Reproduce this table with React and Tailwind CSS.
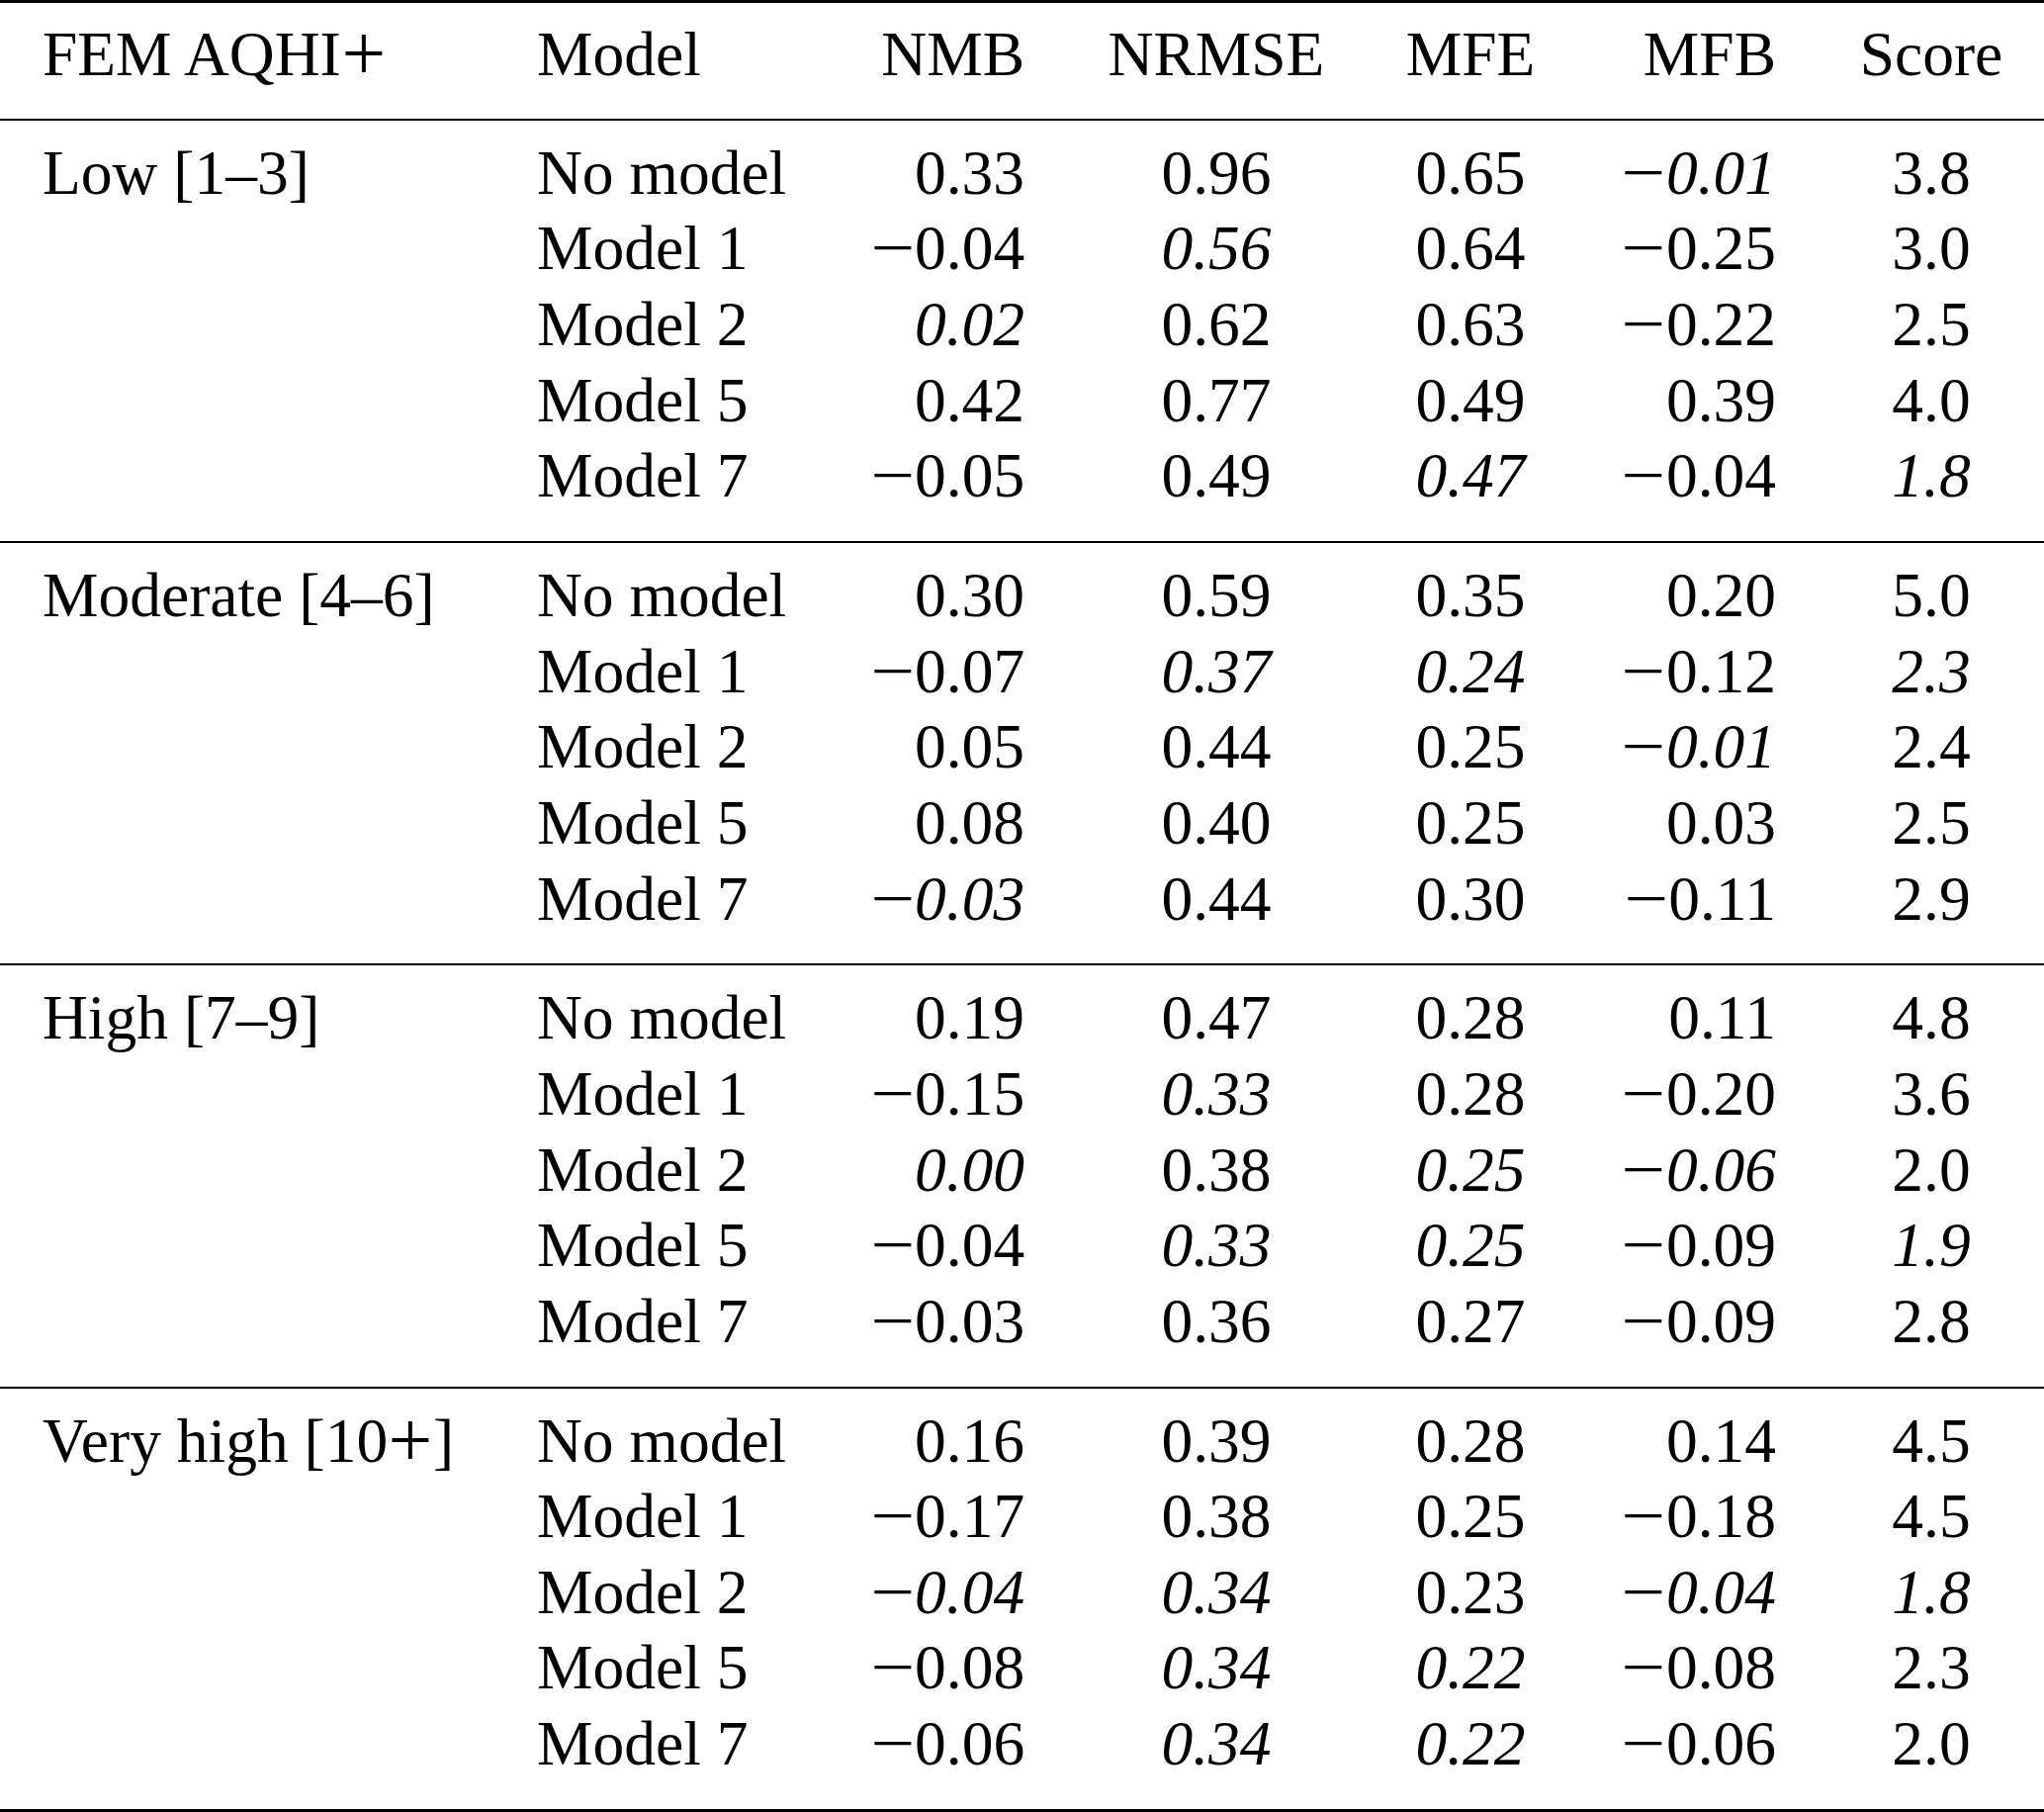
import React from 'react';

// values prefixed with "_" are set in italics (best per group)
const groups = [
  {
    label: 'Low [1–3]',
    rows: [
      ['No model', '0.33', '0.96', '0.65', '_-0.01', '3.8'],
      ['Model 1', '-0.04', '_0.56', '0.64', '-0.25', '3.0'],
      ['Model 2', '_0.02', '0.62', '0.63', '-0.22', '2.5'],
      ['Model 5', '0.42', '0.77', '0.49', '0.39', '4.0'],
      ['Model 7', '-0.05', '0.49', '_0.47', '-0.04', '_1.8'],
    ],
  },
  {
    label: 'Moderate [4–6]',
    rows: [
      ['No model', '0.30', '0.59', '0.35', '0.20', '5.0'],
      ['Model 1', '-0.07', '_0.37', '_0.24', '-0.12', '_2.3'],
      ['Model 2', '0.05', '0.44', '0.25', '_-0.01', '2.4'],
      ['Model 5', '0.08', '0.40', '0.25', '0.03', '2.5'],
      ['Model 7', '_-0.03', '0.44', '0.30', '-0.11', '2.9'],
    ],
  },
  {
    label: 'High [7–9]',
    rows: [
      ['No model', '0.19', '0.47', '0.28', '0.11', '4.8'],
      ['Model 1', '-0.15', '_0.33', '0.28', '-0.20', '3.6'],
      ['Model 2', '_0.00', '0.38', '_0.25', '_-0.06', '2.0'],
      ['Model 5', '-0.04', '_0.33', '_0.25', '-0.09', '_1.9'],
      ['Model 7', '-0.03', '0.36', '0.27', '-0.09', '2.8'],
    ],
  },
  {
    label: <>Very high [10<Plus />]</>,
    rows: [
      ['No model', '0.16', '0.39', '0.28', '0.14', '4.5'],
      ['Model 1', '-0.17', '0.38', '0.25', '-0.18', '4.5'],
      ['Model 2', '_-0.04', '_0.34', '0.23', '_-0.04', '_1.8'],
      ['Model 5', '-0.08', '_0.34', '_0.22', '-0.08', '2.3'],
      ['Model 7', '-0.06', '_0.34', '_0.22', '-0.06', '2.0'],
    ],
  },
];

// math-style plus / minus are wider than the text glyphs
function Plus() {
  return (
    <span className="inline-block w-[0.72em] text-center not-italic">
      <span className="inline-block scale-[1.25]">+</span>
    </span>
  );
}

const Minus = () => (
  <span className="inline-block w-[0.71em] text-center not-italic">
    <span className="inline-block scale-x-[1.25]">−</span>
  </span>
);

const Num = ({ v }) => {
  const italic = v.startsWith('_');
  let s = italic ? v.slice(1) : v;
  const neg = s.startsWith('-');
  if (neg) s = s.slice(1);
  return (
    <>
      {neg && <Minus />}
      <span className={italic ? 'italic' : ''}>{s}</span>
    </>
  );
};

const gridCols = 'grid grid-cols-[500px_337px_220px_260px_254px_225px_228px] pl-[43px]';

const Row = ({ first, cells }) => (
  <div className={gridCols}>
    <div className="whitespace-nowrap">{first}</div>
    <div className="whitespace-nowrap">{cells[0]}</div>
    <div className="text-right pr-[64px] whitespace-nowrap">{cells[1]}</div>
    <div className="flex justify-center whitespace-nowrap">{cells[2]}</div>
    <div className="flex justify-center whitespace-nowrap">{cells[3]}</div>
    <div className="text-right pr-[43px] whitespace-nowrap">{cells[4]}</div>
    <div className="flex justify-center whitespace-nowrap">{cells[5]}</div>
  </div>
);

export default function App() {
  return (
    <div
      className="w-[2067px] bg-white text-black text-[63.5px] leading-[76.65px]"
      style={{ fontFamily: '"Liberation Serif", "Times New Roman", serif' }}
    >
      <div className="h-[3px] bg-black" />
      <div className="pt-[14px] pb-[26px]">
        <Row first={<>FEM AQHI<Plus /></>} cells={['Model', 'NMB', 'NRMSE', 'MFE', 'MFB', 'Score']} />
      </div>
      {groups.map((g, gi) => (
        <div key={gi}>
          <div className="h-[2px] bg-black" />
          <div className="pt-[15px] pb-[27px]">
            {g.rows.map((r, ri) => (
              <Row
                key={ri}
                first={ri === 0 ? g.label : ''}
                cells={[r[0], ...r.slice(1).map((v, k) => <Num key={k} v={v} />)]}
              />
            ))}
          </div>
        </div>
      ))}
      <div className="h-[3px] bg-black" />
    </div>
  );
}
